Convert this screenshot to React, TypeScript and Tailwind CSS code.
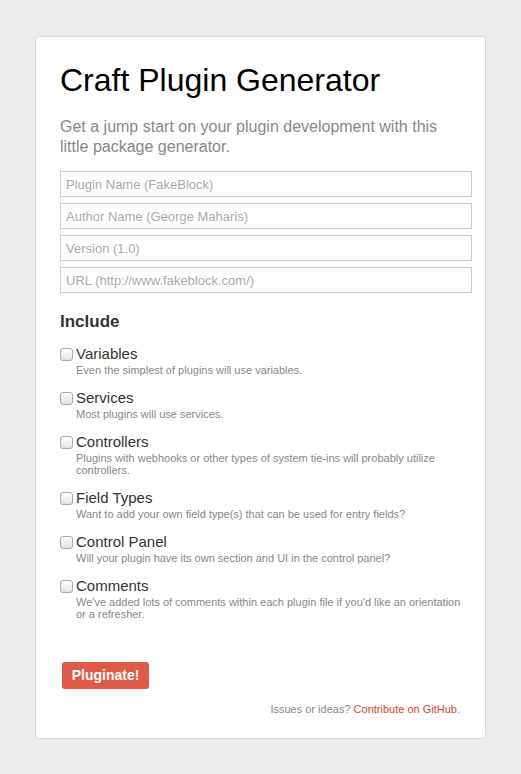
const fields = [
  "Plugin Name (FakeBlock)",
  "Author Name (George Maharis)",
  "Version (1.0)",
  "URL (http://www.fakeblock.com/)",
];

const options = [
  { label: "Variables", desc: "Even the simplest of plugins will use variables." },
  { label: "Services", desc: "Most plugins will use services." },
  {
    label: "Controllers",
    desc: "Plugins with webhooks or other types of system tie-ins will probably utilize controllers.",
  },
  { label: "Field Types", desc: "Want to add your own field type(s) that can be used for entry fields?" },
  { label: "Control Panel", desc: "Will your plugin have its own section and UI in the control panel?" },
  {
    label: "Comments",
    desc: "We've added lots of comments within each plugin file if you'd like an orientation or a refresher.",
  },
];

export default function App() {
  return (
    <div className="min-h-[774px] bg-[#ececec] pt-[36px] pb-[36px] font-['Liberation_Sans',Arial,sans-serif]">
      <div className="mx-auto w-[451px] rounded-[4px] border border-[#d9d9d9] bg-white pl-[24px] pr-[13px] pt-[23px] pb-[20px]">
        <h1 className="text-[32px] leading-[40px] text-black">Craft Plugin Generator</h1>
        <p className="mt-[17px] w-[390px] text-[16px] leading-[20px] text-[#888]">
          Get a jump start on your plugin development with this little package generator.
        </p>

        {/* Champs */}
        <div className="mt-[14px] flex flex-col gap-[6px]">
          {fields.map((f) => (
            <input
              key={f}
              type="text"
              placeholder={f}
              className="h-[26px] w-[412px] border border-[#ccc] bg-white px-[5px] text-[13px] text-[#555] placeholder:text-[#aaa] outline-none"
            />
          ))}
        </div>

        <h3 className="mt-[19px] text-[17px] font-bold leading-[20px] text-[#333]">Include</h3>

        <div className="mt-[13px] flex flex-col gap-[13px]">
          {options.map((o) => (
            <label key={o.label} className="flex items-start gap-[3px]">
              <input
                type="checkbox"
                className="mt-[3px] h-[13px] w-[13px] shrink-0 appearance-none rounded-[3px] border border-[#a9a9a9] bg-gradient-to-b from-white to-[#e2e2e2]"
              />
              <div className="w-[396px]">
                <div className="text-[15px] leading-[18px] text-[#333]">{o.label}</div>
                <div className="pt-[1px] text-[11px] leading-[12px] text-[#888]">{o.desc}</div>
              </div>
            </label>
          ))}
        </div>

        <button className="mt-[42px] ml-[2px] h-[27px] w-[87px] rounded-[3px] bg-[#dd5a48] text-[14px] font-bold text-white">
          Pluginate!
        </button>

        <p className="mt-[12px] pr-[12px] text-right text-[11px] text-[#888]">
          Issues or ideas? <a className="text-[#d9452f]">Contribute on GitHub</a>.
        </p>
      </div>
    </div>
  );
}
